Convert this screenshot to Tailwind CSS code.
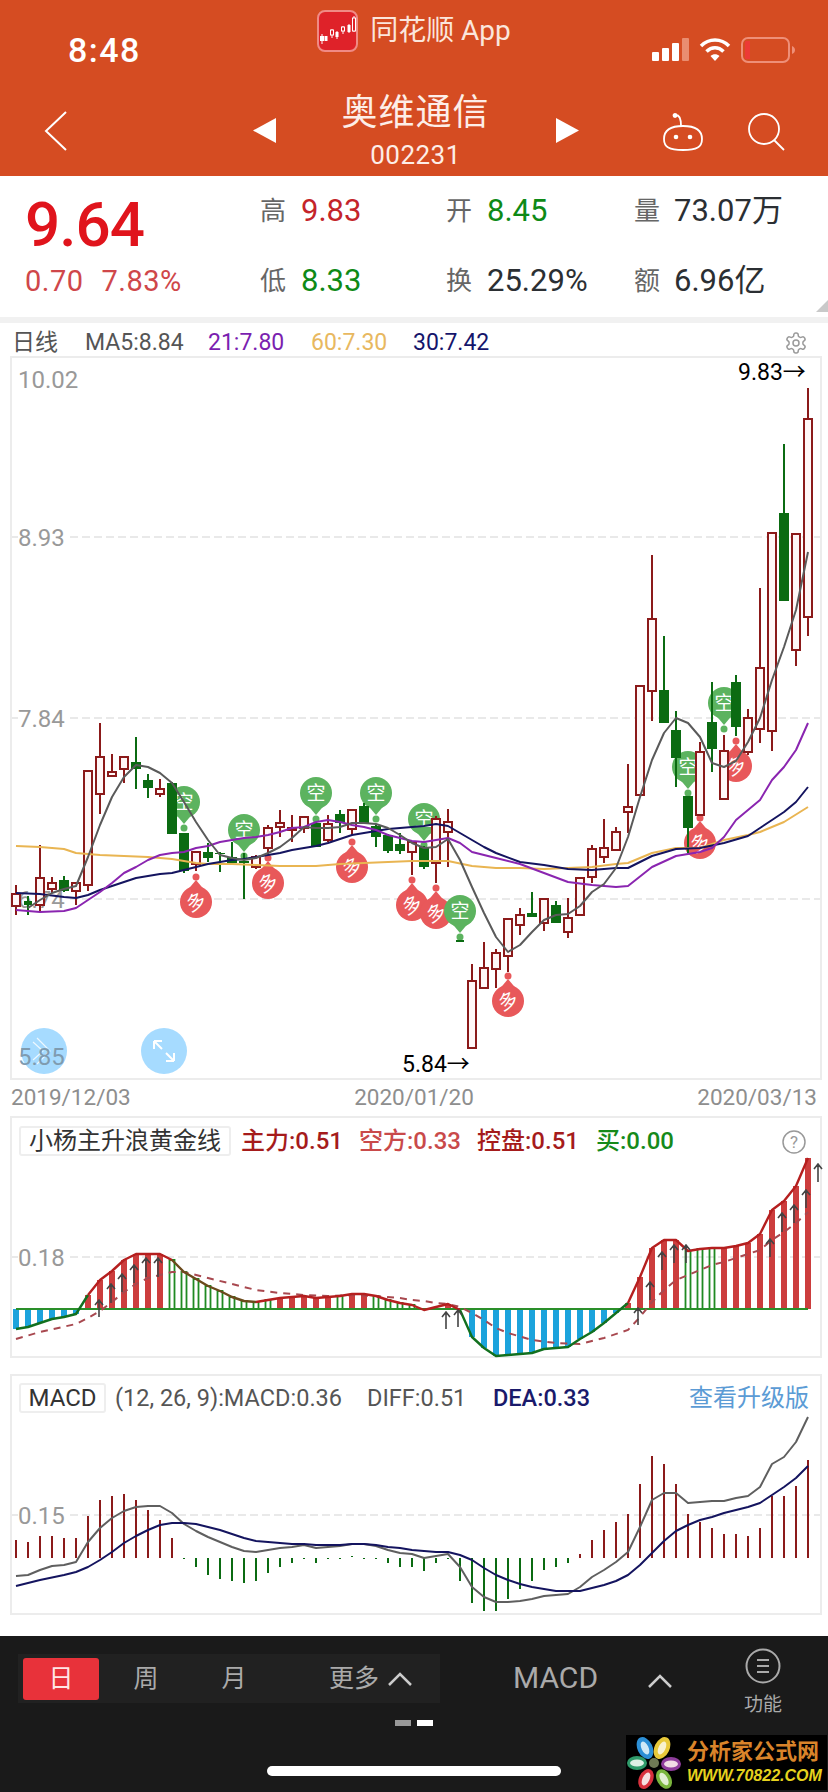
<!DOCTYPE html>
<html lang="zh">
<head>
    <meta charset="UTF-8">
    <meta name="viewport" content="width=device-width, initial-scale=1.0">
    <title>奥维通信 - 同花顺</title>
    <script src="https://cdn.jsdelivr.net/npm/@tailwindcss/browser@4"></script>
</head>
<body class="bg-white">
<div class="relative w-[828px] h-[1792px] overflow-hidden flex flex-col bg-white [font-family:Roboto,'Noto_Sans_CJK_SC',sans-serif]">

    <!-- Header -->
    <header class="h-[176px] shrink-0 bg-[#d54c22] text-white">
        <!-- status bar -->
        <div class="h-[72px] grid grid-cols-[1fr_auto_1fr]">
            <div class="pl-[68px] pt-[28px] text-[34px] leading-[44px] font-medium tracking-[1.5px]">8:48</div>
            <div class="flex items-start gap-[12px] pt-[10px]">
                <svg width="41" height="42" viewBox="0 0 41 42">
                    <rect x="1" y="1" width="39" height="40" rx="7" fill="#df2229" stroke="#f08a85" stroke-width="2"/>
                    <path d="M5 24v10M15 19v9M20 21v8M26 16v8M32 14v9M37 6v16" fill="none" stroke="#fff" stroke-width="1"/>
                    <rect x="3" y="26" width="4" height="5" fill="#fff"/>
                    <rect x="7.5" y="26" width="3" height="5" fill="#fff"/>
                    <rect x="18.500" y="22" width="3" height="5" fill="#fff"/>
                    <rect x="30.500" y="15" width="3" height="7" fill="#fff"/>
                    <rect x="13.500" y="20" width="3" height="5" fill="#df2229" stroke="#fff"/>
                    <rect x="24.500" y="17" width="3" height="4" fill="#df2229" stroke="#fff"/>
                    <rect x="35.500" y="8" width="3" height="13" fill="#df2229" stroke="#fff"/>
                </svg>
                <span class="text-[28px] leading-[36px] mt-[3px] text-[#fbe6dc]">同花顺 App</span>
            </div>
            <div class="flex justify-end items-start gap-[10px] pt-[37px] pr-[32px]">
                <svg width="37" height="25" viewBox="0 0 37 25">
                    <rect x="0" y="15" width="7" height="9" rx="1" fill="#fff"/>
                    <rect x="10" y="11" width="7" height="13" rx="1" fill="#fff"/>
                    <rect x="20" y="6" width="7" height="18" rx="1" fill="#fff"/>
                    <rect x="30" y="1" width="7" height="23" rx="1" fill="#e98d70"/>
                </svg>
                <svg width="32" height="25" viewBox="0 0 32 25" fill="none" stroke="#fff" stroke-width="3.5">
                    <path d="M2 9c8-8 20-8 28 0"/>
                    <path d="M7.5 14.5c5-5 12-5 17 0"/>
                    <path d="M16 24l-4.500-5c2.500-2.500 6.500-2.500 9 0z" fill="#fff" stroke="none"/>
                </svg>
                <svg width="55" height="26" viewBox="0 0 55 26" fill="none">
                    <rect x="1" y="1" width="47" height="24" rx="6" stroke="#ee8f78" stroke-width="2"/>
                    <path d="M5 4h4v18H5a1 1 0 0 1-1-1V5a1 1 0 0 1 1-1z" fill="#ec3a36"/>
                    <path d="M51 9c2 1 3 2 3 4s-1 3-3 4z" fill="#ee8f78"/>
                </svg>
            </div>
        </div>
        <!-- nav bar -->
        <div class="h-[104px] grid grid-cols-[1fr_auto_1fr]">
            <div class="pl-[44px] pt-[39px]">
                <svg width="24" height="40" viewBox="0 0 24 40" fill="none" stroke="#fff" stroke-width="2">
                    <path d="M22 1 2 20l20 19"/>
                </svg>
            </div>
            <div class="flex items-start pl-[3px]">
                <svg class="mt-[46px]" width="23" height="25" viewBox="0 0 23 25"><path d="M23 0v25L0 12.5z" fill="#fff"/></svg>
                <div class="w-[280px] flex flex-col items-center">
                    <div class="mt-[19px] text-[36px] leading-[44px] tracking-[1px] text-[#fdeee8]">奥维通信</div>
                    <div class="mt-[6px] text-[26px] leading-[28px] tracking-[0.5px] text-[#fdeee8]">002231</div>
                </div>
                <svg class="mt-[46px]" width="23" height="25" viewBox="0 0 23 25"><path d="M0 0v25l23-12.5z" fill="#fff"/></svg>
            </div>
            <div class="flex justify-end items-start gap-[45px] pt-[41px] pr-[42px]">
                <svg width="40" height="38" viewBox="0 0 40 38" fill="none" stroke="#fff" stroke-width="1.8">
                    <path d="M13 2c3 0 5 3 5 11"/>
                    <circle cx="12" cy="2.5" r="1.5" fill="#fff"/>
                    <path d="M20 13c11 0 19 3 19 13 0 8-5 11-19 11S1 34 1 26c0-10 8-13 19-13z"/>
                    <circle cx="13" cy="24" r="2.3" fill="#fff" stroke="none"/>
                    <circle cx="27" cy="24" r="2.3" fill="#fff" stroke="none"/>
                </svg>
                <svg width="38" height="38" viewBox="0 0 38 38" fill="none" stroke="#fff" stroke-width="1.8">
                    <circle cx="16" cy="16" r="15"/>
                    <path d="m26 27 10 10"/>
                </svg>
            </div>
        </div>
    </header>

    <!-- Quote summary -->
    <section class="relative h-[141px] shrink-0 flex">
        <div class="w-[260px] pl-[25px]">
            <div class="h-[70px] pt-[14px] text-[62px] leading-[70px] font-medium text-[#e0141c] tracking-[-1px]">9.64</div>
            <div class="h-[71px] flex items-center gap-[18px] text-[29px] tracking-[0.5px] text-[#cf474a]">
                <span>0.70</span><span>7.83%</span>
            </div>
        </div>
        <div class="flex-1 grid grid-cols-[186px_188px_1fr] grid-rows-[70px_71px] items-center text-[31px] text-[#2b2f33]">
            <div class="flex items-center gap-[15px]"><span class="text-[26px] text-[#666]">高</span><span class="text-[#c4242a]">9.83</span></div>
            <div class="flex items-center gap-[15px]"><span class="text-[26px] text-[#666]">开</span><span class="text-[#0e8a16]">8.45</span></div>
            <div class="flex items-center gap-[14px]"><span class="text-[26px] text-[#666]">量</span><span>73.07万</span></div>
            <div class="flex items-center gap-[15px]"><span class="text-[26px] text-[#666]">低</span><span class="text-[#0e8a16]">8.33</span></div>
            <div class="flex items-center gap-[15px]"><span class="text-[26px] text-[#666]">换</span><span>25.29%</span></div>
            <div class="flex items-center gap-[14px]"><span class="text-[26px] text-[#666]">额</span><span>6.96亿</span></div>
        </div>
        <svg class="absolute right-0 bottom-[5px]" width="13" height="12" viewBox="0 0 13 12"><path d="M13 0v12H1z" fill="#c9c9c9"/></svg>
    </section>
    <div class="h-[6px] shrink-0 bg-[#f1f1f1]"></div>

    <!-- MA legend -->
    <div class="h-[33px] shrink-0 flex items-center pt-[6px] pl-[12px] pr-[20px] text-[23px] leading-[26px]">
        <span class="w-[73px] text-[#555]">日线</span>
        <span class="w-[123px] text-[#555]">MA5:8.84</span>
        <span class="w-[103px] text-[#7b1fb0]">21:7.80</span>
        <span class="w-[102px] text-[#e8b860]">60:7.30</span>
        <span class="text-[#15156b]">30:7.42</span>
        <svg class="ml-auto" width="24" height="24" viewBox="0 0 24 24" fill="none" stroke="#9a9a9a" stroke-width="1.5">
            <path d="M12.22 2h-.44a2 2 0 0 0-2 2v.18a2 2 0 0 1-1 1.73l-.43.25a2 2 0 0 1-2 0l-.15-.08a2 2 0 0 0-2.73.73l-.22.38a2 2 0 0 0 .73 2.73l.15.1a2 2 0 0 1 1 1.72v.51a2 2 0 0 1-1 1.74l-.15.09a2 2 0 0 0-.73 2.73l.22.38a2 2 0 0 0 2.73.73l.15-.08a2 2 0 0 1 2 0l.43.25a2 2 0 0 1 1 1.73V20a2 2 0 0 0 2 2h.44a2 2 0 0 0 2-2v-.18a2 2 0 0 1 1-1.73l.43-.25a2 2 0 0 1 2 0l.15.08a2 2 0 0 0 2.73-.73l.22-.39a2 2 0 0 0-.73-2.73l-.15-.08a2 2 0 0 1-1-1.74v-.5a2 2 0 0 1 1-1.74l.15-.09a2 2 0 0 0 .73-2.73l-.22-.38a2 2 0 0 0-2.73-.73l-.15.08a2 2 0 0 1-2 0l-.43-.25a2 2 0 0 1-1-1.73V4a2 2 0 0 0-2-2z"/>
            <circle cx="12" cy="12" r="3"/>
        </svg>
    </div>

    <!-- Candlestick chart -->
    <div class="ml-[10px] w-[812px] h-[724px] shrink-0 border-2 border-[#ececec]">
        <svg class="block overflow-visible" width="808" height="720" viewBox="12 358 808 720">
            <defs>
                <g id="kong"><circle r="16" fill="#5cb35f"/><path d="M-8 12.5 0 22l8-9.5z" fill="#5cb35f"/><circle cy="26" r="3.5" fill="#5cb35f"/></g>
                <g id="duo"><circle r="16" fill="#e8585a"/><path d="M-8-12.5 0-22l8 9.5z" fill="#e8585a"/><circle cy="-25" r="3.5" fill="#e8585a"/></g>
            </defs>
            <path d="M12 537h6M70 537H820M12 718h6M70 718H820M70 899H820" stroke="#e2e2e2" stroke-width="1.5" stroke-dasharray="8 4"/>
            <g font-size="24" fill="#999">
                <text x="18" y="388">10.02</text>
                <text x="18" y="546">8.93</text>
                <text x="18" y="727">7.84</text>
                <text x="18" y="908">6.74</text>
            </g>
            <!-- signal pins -->
            <g>
                <use href="#kong" x="184" y="802"/><use href="#kong" x="244" y="830"/><use href="#kong" x="316" y="793"/><use href="#kong" x="376" y="793"/><use href="#kong" x="424" y="819"/><use href="#kong" x="724" y="703"/><use href="#kong" x="688" y="767"/>
                <use href="#duo" x="196" y="902"/><use href="#duo" x="268" y="883"/><use href="#duo" x="352" y="867"/><use href="#duo" x="412" y="905"/><use href="#duo" x="436" y="913"/><use href="#duo" x="508" y="1001"/><use href="#duo" x="700" y="843"/><use href="#duo" x="736" y="766"/>
                <use href="#kong" x="460" y="911"/>
            </g>
            <g font-size="19" fill="#fff" text-anchor="middle">
                <text x="184" y="809">空</text><text x="244" y="837">空</text><text x="316" y="800">空</text><text x="376" y="800">空</text><text x="424" y="826">空</text><text x="724" y="710">空</text><text x="688" y="774">空</text><text x="460" y="918">空</text>
                <text x="196" y="909" transform="rotate(-25 196 902)">多</text><text x="268" y="890" transform="rotate(-25 268 883)">多</text><text x="352" y="874" transform="rotate(-25 352 867)">多</text><text x="412" y="912" transform="rotate(-25 412 905)">多</text><text x="436" y="920" transform="rotate(-25 436 913)">多</text><text x="508" y="1008" transform="rotate(-25 508 1001)">多</text><text x="700" y="850" transform="rotate(-25 700 843)">多</text><text x="736" y="773" transform="rotate(-25 736 766)">多</text>
            </g>
            <!-- rising candles -->
            <path stroke="#8b1a1a" stroke-width="2" fill="none" d="M16 885V915M40 845V912M52 877V893M76 882V905M88 771V891M100 723V814M112 754V776M124 757V783M160 779V797M196 852V871M256 855V869M268 825V855M280 810V837M292 815V842M304 816V833M328 815V842M352 810V835M412 842V875M436 816V883M448 809V867M472 964V1048M484 942V988M496 949V988M508 918V972M520 908V935M544 898V931M568 898V938M592 845V883M604 819V863M616 827V850M628 764V833M652 555V721M700 742V815M724 735V799M748 709V755M760 588V743M772 533V751M796 533V666M808 388V636"/>
            <path stroke="#8b1a1a" stroke-width="2" fill="#fff7f7" d="M12 894h8v12h-8zM36 878h8v27h-8zM48 883h8v6h-8zM72 883h8v8h-8zM84 771h8v114h-8zM96 757h8v37h-8zM108 772h8v4h-8zM120 757h8v12h-8zM156 789h8v5h-8zM192 852h8v12h-8zM252 857h8v10h-8zM264 828h8v20h-8zM276 823h8v4h-8zM288 828h8v2h-8zM300 817h8v11h-8zM324 824h8v16h-8zM348 810h8v19h-8zM408 842h8v10h-8zM432 819h8v44h-8zM444 822h8v10h-8zM468 981h8v67h-8zM480 968h8v20h-8zM492 953h8v16h-8zM504 919h8v37h-8zM516 915h8v10h-8zM540 899h8v24h-8zM564 918h8v14h-8zM576 878h8v37h-8zM588 849h8v28h-8zM600 848h8v9h-8zM612 832h8v18h-8zM624 807h8v5h-8zM636 686h8v109h-8zM648 619h8v72h-8zM696 752h8v63h-8zM720 751h8v48h-8zM744 718h8v34h-8zM756 668h8v61h-8zM768 533h8v198h-8zM792 534h8v116h-8zM804 419h8v198h-8z"/>
            <!-- falling candles -->
            <path stroke="#0b6b12" stroke-width="2" fill="none" d="M28 896V915M64 876V892M136 737V789M148 774V798M172 782V834M184 833V873M208 843V862M220 852V872M232 842V864M244 853V899M316 822V847M340 810V833M364 803V823M376 825V847M388 834V853M400 833V854M424 846V869M532 892V917M556 901V923M664 636V723M676 711V787M688 796V853M712 682V772M736 675V736M784 444V601"/>
            <path fill="#0b6b12" d="M24 901h8v4h-8zM59 880h10v11H59zM131 762h10v7h-10zM143 780h10v8h-10zM167 783h10v51h-10zM179 833h10v38h-10zM203 852h10v6h-10zM215 853h10v1h-10zM227 857h10v6h-10zM239 861h10v2h-10zM311 823h10v24h-10zM335 814h10v9h-10zM359 806h10v17h-10zM371 826h10v11h-10zM383 835h10v16h-10zM395 844h10v7h-10zM419 847h10v20h-10zM456 940h8v2h-8zM527 913h10v4h-10zM551 905h10v18h-10zM659 690h10v33h-10zM671 730h10v28h-10zM683 796h10v32h-10zM707 722h10v27h-10zM731 682h10v45h-10zM779 513h10v88h-10z"/>
            <!-- moving averages -->
            <g fill="none" stroke-width="2" stroke-linejoin="round">
                <polyline stroke="#e9b552" points="16,846 40,847 64,849 76,853 88,854 100,855 124,856 148,857 172,859 184,861 196,863 208,864 232,864 256,865 280,866 316,866 340,864 364,863 388,862 412,861 436,861 448,861 472,866 496,868 520,868 544,869 568,868 592,867 616,864 628,863 652,853 676,848 700,848 724,840 748,835 760,832 784,822 808,807"/>
                <polyline stroke="#14145f" points="16,893 40,894 64,897 76,898 88,895 100,890 112,886 124,882 136,878 148,876 160,874 172,873 184,870 196,867 208,864 220,862 232,860 244,859 256,857 268,855 280,853 292,850 304,848 316,846 328,843 340,839 352,835 364,833 376,831 388,829 400,828 412,827 424,826 436,824 448,826 460,833 472,840 484,847 496,853 520,862 544,865 568,869 592,870 616,868 628,868 652,856 676,849 700,848 724,843 748,836 760,828 772,820 784,812 796,802 808,787"/>
                <polyline stroke="#8a25b0" points="16,910 40,912 64,911 76,908 88,900 100,892 112,883 124,873 136,867 148,860 160,855 172,853 184,852 196,848 208,846 220,842 232,840 244,838 256,837 268,835 280,832 292,828 304,827 316,822 328,820 340,822 352,825 364,827 376,830 388,835 400,838 412,841 424,842 436,840 448,838 460,843 472,852 484,855 496,858 520,864 544,873 568,882 592,885 616,887 628,886 652,867 676,856 700,852 712,848 724,837 736,820 760,800 772,780 784,767 796,750 808,723"/>
                <polyline stroke="#5a5a5a" points="28,908 40,900 52,893 64,889 76,886 88,857 100,825 112,797 124,777 136,765 148,767 160,773 172,783 184,802 196,822 208,840 220,855 232,858 244,860 256,858 268,853 280,847 292,838 304,827 316,828 328,828 340,827 352,823 364,823 376,824 388,828 400,835 412,843 424,848 436,847 448,839 460,860 472,887 484,913 496,937 508,952 520,945 532,932 544,920 556,915 568,914 580,906 592,892 604,884 616,868 628,837 640,797 652,760 664,733 676,718 688,723 700,737 712,763 724,767 736,761 748,742 760,718 772,680 784,647 796,610 808,552"/>
            </g>
            <!-- hi / lo marks -->
            <g font-size="23" fill="#000">
                <text x="738" y="380">9.83→</text>
                <text x="402" y="1072">5.84→</text>
            </g>
            <!-- floating buttons -->
            <circle cx="44" cy="1051" r="23" fill="#a6dbff"/>
            <path d="M37 1038l13 13-13 13M33 1042l10 9-10 9" fill="none" stroke="#fff" stroke-opacity=".8" stroke-width="1.2"/>
            <text x="18" y="1065" font-size="24" fill="#7f9bb0">5.85</text>
            <circle cx="164" cy="1051" r="23" fill="#a6dbff"/>
            <path d="M154 1041l8 8M154 1041h8M154 1041v8M174 1061l-8-8M174 1061h-8M174 1061v-8" fill="none" stroke="#fff" stroke-width="2"/>
        </svg>
    </div>

    <!-- Dates -->
    <div class="h-[36px] shrink-0 flex justify-between items-center pl-[11px] pr-[11px] text-[22.5px] text-[#8e8e8e]">
        <span>2019/12/03</span><span>2020/01/20</span><span>2020/03/13</span>
    </div>

    <!-- Golden line indicator -->
    <div class="ml-[10px] w-[812px] h-[242px] shrink-0 border-2 border-[#ececec]">
        <div class="relative h-[42px] flex items-start pt-[8px] pl-[7px] text-[24px] leading-[30px]">
            <span class="h-[30px] px-[8px] w-[212px] border-2 border-[#eeeeee] rounded-[3px] leading-[26px] text-[#333] whitespace-nowrap">小杨主升浪黄金线</span>
            <span class="ml-[10px] w-[118px] font-medium text-[#a51b1b]">主力:0.51</span>
            <span class="w-[118px] font-medium text-[#c94a4a]">空方:0.33</span>
            <span class="w-[119px] font-medium text-[#a51b1b]">控盘:0.51</span>
            <span class="font-medium text-[#158a1a]">买:0.00</span>
            <svg class="absolute right-[14px] top-[12px]" width="24" height="24" viewBox="0 0 24 24">
                <circle cx="12" cy="12" r="11" fill="none" stroke="#999" stroke-width="1.5"/>
                <text x="12" y="18" font-size="17" fill="#999" text-anchor="middle">?</text>
            </svg>
        </div>
        <svg class="block overflow-visible" width="808" height="196" viewBox="12 1160 808 196">
            <path d="M12 1257h6M70 1257H820" stroke="#e2e2e2" stroke-width="1.5" stroke-dasharray="8 4"/>
            <text x="18" y="1266" font-size="24" fill="#999">0.18</text>
            <!-- blue: below zero -->
            <path stroke="#1ca3dc" stroke-width="6" d="M16 1309V1329M28 1309V1327M40 1309V1323M52 1309V1319M64 1309V1317M76 1309V1314M472 1309V1337M484 1309V1348M496 1309V1356M508 1309V1355M520 1309V1354M532 1309V1353M544 1309V1349M556 1309V1348M568 1309V1347M580 1309V1339M592 1309V1332M604 1309V1323M616 1309V1313"/>
            <!-- red: rising -->
            <path stroke="#cc3d3d" stroke-width="6" d="M88 1309V1295M100 1309V1280M112 1309V1271M124 1309V1260M136 1309V1254M148 1309V1254M160 1309V1254M280 1309V1298M292 1309V1297M304 1309V1296M316 1309V1298M328 1309V1297M352 1309V1294M364 1309V1294M448 1309V1304M628 1309V1303M640 1309V1277M652 1309V1248M664 1309V1240M676 1309V1240M724 1309V1248M736 1309V1246M748 1309V1243M760 1309V1234M772 1309V1210M784 1309V1201M796 1309V1186M808 1309V1158"/>
            <!-- green outline: positive, falling -->
            <path stroke="#1f8a22" stroke-width="1.8" fill="none" d="M169.500 1309V1260h5V1309M181.500 1309V1272h5V1309M193.500 1309V1279h5V1309M205.500 1309V1286h5V1309M217.500 1309V1291h5V1309M229.500 1309V1297h5V1309M241.500 1309V1301h5V1309M253.500 1309V1302h5V1309M265.500 1309V1300h5V1309M337.500 1309V1296h5V1309M373.500 1309V1296h5V1309M385.500 1309V1300h5V1309M397.500 1309V1303h5V1309M409.500 1309V1305h5V1309M685.500 1309V1251h5V1309M697.500 1309V1249h5V1309M709.500 1309V1248h5V1309"/>
            <path d="M16 1309H808" stroke="#2a8f2a" stroke-width="2"/>
            <polyline fill="none" stroke="#a8484f" stroke-width="2" stroke-dasharray="7 6" points="16,1339 40,1332 76,1324 88,1318 100,1311 112,1302 124,1292 136,1284 148,1278 172,1272 184,1272 208,1278 232,1284 256,1290 280,1293 304,1295 328,1296 352,1295 376,1296 400,1298 412,1300 424,1301 436,1303 448,1304 460,1307 472,1313 484,1320 496,1328 508,1333 532,1340 556,1343 580,1344 604,1338 628,1330 640,1317 652,1302 664,1290 676,1280 688,1275 712,1265 724,1262 736,1258 760,1250 772,1240 784,1232 796,1223 808,1212"/>
            <g fill="none" stroke-width="2.4" stroke-linejoin="round">
                <polyline stroke="#12701f" points="16,1329 28,1327 40,1323 52,1319 64,1317 76,1314 88,1295"/>
                <polyline stroke="#b51f1f" points="88,1295 100,1280 112,1271 124,1260 136,1254 148,1254 160,1254 172,1260"/>
                <polyline stroke="#6b4a1c" points="172,1260 184,1272 196,1279 208,1286 220,1291 232,1297 244,1301 256,1302"/>
                <polyline stroke="#b51f1f" points="256,1302 268,1300 280,1298 292,1297 304,1296 316,1298 328,1297 340,1296 352,1294 364,1294 376,1296 388,1300 400,1303 412,1305 424,1310 436,1307 448,1304 460,1310"/>
                <polyline stroke="#12701f" points="460,1310 472,1337 484,1348 496,1356 508,1355 520,1354 532,1353 544,1349 556,1348 568,1347 580,1339 592,1332 604,1323 616,1313 628,1303"/>
                <polyline stroke="#b51f1f" points="628,1303 640,1277 652,1248 664,1240 676,1240 688,1251 700,1249 712,1248 724,1248 736,1246 748,1243 760,1234 772,1210 784,1201 796,1186 808,1158"/>
            </g>
            <path stroke="#444" stroke-width="1.6" fill="none" d="M99 1317V1300m-4 5 4-5 4 5M111 1303V1284m-4 5 4-5 4 5M122 1292V1274m-4 5 4-5 4 5M134 1283V1265m-4 5 4-5 4 5M146 1277V1258m-4 5 4-5 4 5M158 1277V1258m-4 5 4-5 4 5M446 1329V1312m-4 5 4-5 4 5M458 1327V1310m-4 5 4-5 4 5M638 1325V1308m-4 5 4-5 4 5M650 1300V1282m-4 5 4-5 4 5M662 1270V1252m-4 5 4-5 4 5M674 1263V1245m-4 5 4-5 4 5M686 1263V1245m-4 5 4-5 4 5M770 1257V1239m-4 5 4-5 4 5M782 1232V1213m-4 5 4-5 4 5M794 1223V1205m-4 5 4-5 4 5M806 1208V1190m-4 5 4-5 4 5M818 1182V1164m-4 5 4-5 4 5"/>
        </svg>
    </div>

    <div class="h-[16px] shrink-0"></div>

    <!-- MACD -->
    <div class="ml-[10px] w-[812px] h-[241px] shrink-0 border-2 border-[#ececec]">
        <div class="h-[42px] flex items-start pt-[7px] pl-[7px] pr-[11px] text-[23.5px] leading-[30px] text-[#555]">
            <span class="h-[30px] w-[87px] text-center border-2 border-[#eeeeee] rounded-[3px] leading-[26px] text-[24px] text-[#333]">MACD</span>
            <span class="ml-[9px] w-[252px] whitespace-nowrap">(12, 26, 9):MACD:0.36</span>
            <span class="w-[126px]">DIFF:0.51</span>
            <span class="font-medium text-[#1a1a6b]">DEA:0.33</span>
            <span class="ml-auto text-[24px] text-[#5b9bd5]">查看升级版</span>
        </div>
        <svg class="block overflow-visible" width="808" height="195" viewBox="12 1418 808 195">
            <path d="M12 1515h6M70 1515H820" stroke="#e2e2e2" stroke-width="1.5" stroke-dasharray="8 4"/>
            <text x="18" y="1524" font-size="24" fill="#999">0.15</text>
            <path stroke="#8b1a1a" stroke-width="2" d="M16 1558V1540M28 1558V1542M40 1558V1536M52 1558V1536M64 1558V1538M76 1558V1538M88 1558V1516M100 1558V1500M112 1558V1496M124 1558V1494M136 1558V1500M148 1558V1510M160 1558V1520M172 1558V1538M580 1558V1554M592 1558V1540M604 1558V1530M616 1558V1522M628 1558V1514M640 1558V1484M652 1558V1456M664 1558V1464M676 1558V1484M688 1558V1514M700 1558V1522M712 1558V1528M724 1558V1534M736 1558V1534M748 1558V1536M760 1558V1528M772 1558V1496M784 1558V1496M796 1558V1486M808 1558V1460"/>
            <path stroke="#0b6b12" stroke-width="2" d="M184 1558V1559M196 1558V1567M208 1558V1575M220 1558V1579M232 1558V1581M244 1558V1583M256 1558V1581M268 1558V1573M280 1558V1567M292 1558V1563M304 1558V1559M316 1558V1563M328 1558V1559M340 1558V1559M352 1556V1557M364 1558V1559M376 1558V1559M388 1558V1563M400 1558V1567M412 1558V1567M424 1558V1571M436 1558V1563M448 1558V1559M460 1558V1581M472 1558V1603M484 1558V1611M496 1558V1611M508 1558V1599M520 1558V1589M532 1558V1581M544 1558V1570M556 1558V1567M568 1558V1563"/>
            <g fill="none" stroke-width="2" stroke-linejoin="round">
                <polyline stroke="#5f5f5f" points="16,1576 28,1575 40,1570 52,1566 64,1565 76,1562 88,1542 100,1528 112,1518 124,1511 136,1507 148,1506 160,1506 172,1513 184,1524 196,1531 208,1537 220,1542 232,1547 244,1551 256,1552 268,1550 280,1548 292,1547 304,1545 316,1548 328,1547 340,1546 352,1544 364,1544 376,1546 388,1550 400,1553 412,1554 424,1558 436,1556 448,1554 460,1567 472,1587 484,1597 496,1602 508,1602 520,1601 532,1599 544,1596 556,1595 568,1594 580,1587 592,1577 604,1570 616,1562 628,1552 640,1527 652,1500 664,1493 676,1493 688,1503 700,1502 712,1501 724,1501 736,1498 748,1496 760,1487 772,1464 784,1457 796,1442 808,1417"/>
                <polyline stroke="#14145f" points="16,1586 40,1580 64,1575 76,1572 88,1567 100,1560 112,1552 124,1543 136,1536 148,1530 160,1525 172,1523 184,1523 196,1524 208,1527 220,1530 232,1534 244,1538 256,1541 268,1542 280,1543 292,1544 304,1544 316,1545 328,1545 340,1545 352,1544 364,1544 376,1545 388,1547 400,1548 412,1550 424,1551 436,1552 448,1552 460,1555 472,1560 484,1568 496,1575 508,1580 520,1584 532,1587 544,1589 556,1591 568,1591 580,1591 592,1588 604,1585 616,1581 628,1575 640,1565 652,1553 664,1541 676,1531 688,1525 700,1520 712,1517 724,1513 736,1510 748,1507 760,1503 772,1495 784,1487 796,1478 808,1466"/>
            </g>
        </svg>
    </div>

    <div class="flex-1"></div>

    <!-- Bottom toolbar -->
    <footer class="relative h-[156px] shrink-0 bg-[#1a1a1a] text-[#aaaaaa]">
        <div class="h-[77px] flex items-start pt-[12px]">
            <div class="ml-[18px] mt-[6px] w-[422px] h-[49px] flex items-center pl-[5px] bg-[#212121] text-[25px]">
                <span class="w-[76px] h-[42px] flex items-center justify-center rounded-[3px] bg-[#e8323a] text-[#ffe5e5]">日</span>
                <span class="w-[94px] text-center">周</span>
                <span class="w-[82px] text-center">月</span>
                <span class="ml-[54px]">更多</span>
                <svg class="ml-[9px]" width="24" height="14" viewBox="0 0 24 14" fill="none" stroke="#cccccc" stroke-width="2.5"><path d="M1 13 12 2l11 11"/></svg>
            </div>
            <span class="ml-[73px] mt-[13px] text-[30px] leading-[34px]">MACD</span>
            <svg class="ml-[50px] mt-[26px]" width="24" height="14" viewBox="0 0 24 14" fill="none" stroke="#cccccc" stroke-width="2.5"><path d="M1 13 12 2l11 11"/></svg>
            <div class="ml-[72px] flex flex-col items-center">
                <svg width="36" height="36" viewBox="0 0 36 36" fill="none" stroke="#aaaaaa" stroke-width="2">
                    <circle cx="18" cy="18" r="16.5"/>
                    <path d="M12 12h12M12 18h12M12 24h12"/>
                </svg>
                <span class="mt-[11px] text-[19px] leading-[20px]">功能</span>
            </div>
        </div>
        <div class="mt-[7px] flex justify-center gap-[6px]">
            <span class="w-[16px] h-[6px] bg-[#999]"></span>
            <span class="w-[16px] h-[6px] bg-white"></span>
        </div>
        <div class="mt-[40px] mx-auto w-[294px] h-[10px] rounded-full bg-white"></div>

        <!-- watermark -->
        <div class="absolute left-[626px] top-[99px] w-[201px] h-[55px] bg-black flex items-center">
            <svg class="ml-[1px] shrink-0" width="54" height="54" viewBox="-27 -27 54 54">
                <ellipse cx="-9" cy="-15" rx="7.5" ry="11.5" transform="rotate(-25 -9 -15)" fill="#2c8fd6"/>
                <ellipse cx="-9" cy="-15" rx="3.5" ry="7" transform="rotate(-25 -9 -15)" fill="#cfe9f7"/>
                <ellipse cx="8" cy="-15" rx="7.5" ry="11.5" transform="rotate(25 8 -15)" fill="#e8c93a"/>
                <ellipse cx="8" cy="-15" rx="3.5" ry="7" transform="rotate(25 8 -15)" fill="#f8f2cf"/>
                <ellipse cx="17" cy="1" rx="10" ry="7" fill="#8e3d9c"/>
                <ellipse cx="17" cy="1" rx="7" ry="3.5" fill="#f1dde6"/>
                <ellipse cx="10" cy="16" rx="7" ry="10.5" transform="rotate(-30 10 16)" fill="#7ab53c"/>
                <ellipse cx="10" cy="16" rx="3.5" ry="7" transform="rotate(-30 10 16)" fill="#e3f0d2"/>
                <ellipse cx="-8" cy="16" rx="7" ry="10.5" transform="rotate(25 -8 16)" fill="#d8303c"/>
                <ellipse cx="-8" cy="16" rx="3.5" ry="7" transform="rotate(25 -8 16)" fill="#f6dfe0"/>
                <ellipse cx="-17" cy="0" rx="10" ry="7" fill="#2f9a6a"/>
                <ellipse cx="-17" cy="0" rx="7" ry="3.5" fill="#e0f0e6"/>
                <circle r="5" fill="#6f7a55"/>
            </svg>
            <div class="ml-[6px] flex flex-col">
                <span class="text-[22px] leading-[24px] font-bold text-[#d9842a] whitespace-nowrap">分析家公式网</span>
                <span class="mt-[2px] text-[16px] leading-[20px] font-bold italic text-[#e6d21e] whitespace-nowrap [font-family:'Liberation_Sans',sans-serif]">WWW.70822.COM</span>
            </div>
        </div>
    </footer>
</div>
</body>
</html>
